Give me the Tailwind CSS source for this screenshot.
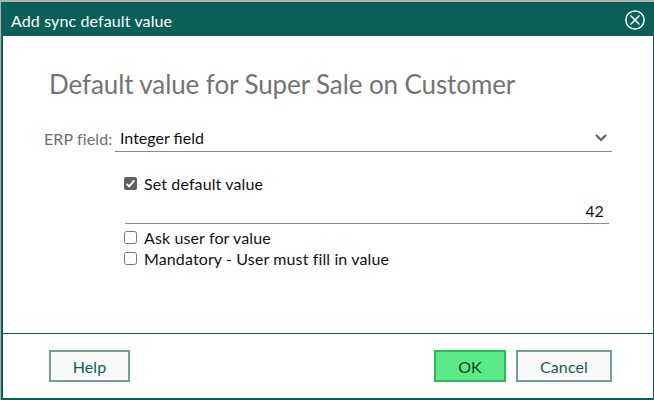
<!DOCTYPE html>
<html lang="en"><head><meta charset="utf-8"><title>Add sync default value</title>
<script src="https://cdn.jsdelivr.net/npm/@tailwindcss/browser@4"></script></head>
<body class="bg-[#b0b0b0]">
<div class="h-[400px] w-[654px] overflow-hidden pt-0.5 pl-px">
<div class="flex h-[398px] flex-col border-r border-b-2 border-l-2 border-[#0a5f58] bg-white font-['Lato',sans-serif] text-[16px] leading-5 tracking-[0.12px] text-[#111]">
<header class="flex h-[34px] shrink-0 items-center justify-between bg-[#0a5f58] pr-2 pl-2 text-white">
<h1 class="pt-1">Add sync default value</h1>
<svg class="mt-0.5 size-5" viewBox="0 0 20 20" fill="none" stroke="currentColor" stroke-width="1.5"><circle cx="10" cy="10" r="9.1"/><path d="M5.5 5.5l9 9m0-9l-9 9"/></svg>
</header>
<main class="flex grow flex-col pt-[30px]">
<h2 class="pl-[46px] text-[26px] leading-9 tracking-[-0.1px] text-[#747474]">Default value for Super Sale on Customer</h2>
<div class="mt-[22px] flex h-7 pl-[41px]"><label class="w-[71px] pt-[5px] whitespace-nowrap text-[#6e6e6e] [font-variant-ligatures:none]">ERP field:</label>
<div class="flex w-[497px] items-center justify-between border-b border-[#888] pr-[5px] pl-[5px]"><span class="tracking-normal">Integer field</span><svg class="h-2 w-3" viewBox="0 0 12 8" fill="none" stroke="#606060" stroke-width="2.2"><path d="M1 1l5 5 5-5"/></svg></div></div>
<div class="ml-[121px] w-[485px]">
<label class="mt-[21px] flex h-5 items-center gap-[7px]"><svg class="size-[13px]" viewBox="0 0 13 13"><rect width="13" height="13" rx="2" fill="#5f5f5f"/><path d="M2.6 6.8l2.6 2.6 5.1-6" fill="none" stroke="#fff" stroke-width="1.9"/></svg><span class="pt-0.5">Set default value</span></label>
<div class="ml-px flex h-[31px] items-end justify-end border-b border-[#888] pr-[5px] pb-0.5"><span>42</span></div>
<label class="mt-1 flex h-[21px] items-center gap-[7px]"><span class="-mt-0.5 size-[13px] rounded-[2.5px] border border-[#767676] bg-white"></span><span class="-mt-px">Ask user for value</span></label>
<label class="flex h-[21px] items-center gap-[7px]"><span class="-mt-0.5 size-[13px] rounded-[2.5px] border border-[#767676] bg-white"></span><span class="-mt-px">Mandatory - User must fill in value</span></label>
</div>
</main>
<footer class="flex h-[65px] shrink-0 border-t border-[#0a5f58] pt-4 pr-[41px] pl-[46px] text-[#0a5f58]"><button class="h-8 w-[81px] border-2 border-[#729d9a] bg-[#fafafa] pt-0.5">Help</button><button class="ml-auto h-8 w-[72px] border-2 border-[#2abb5b] bg-[#5bea87] pt-0.5 text-[#163d2b]">OK</button><button class="ml-2.5 h-8 w-24 border-2 border-[#729d9a] bg-[#fafafa] pt-0.5">Cancel</button></footer>
</div></div></body></html>
